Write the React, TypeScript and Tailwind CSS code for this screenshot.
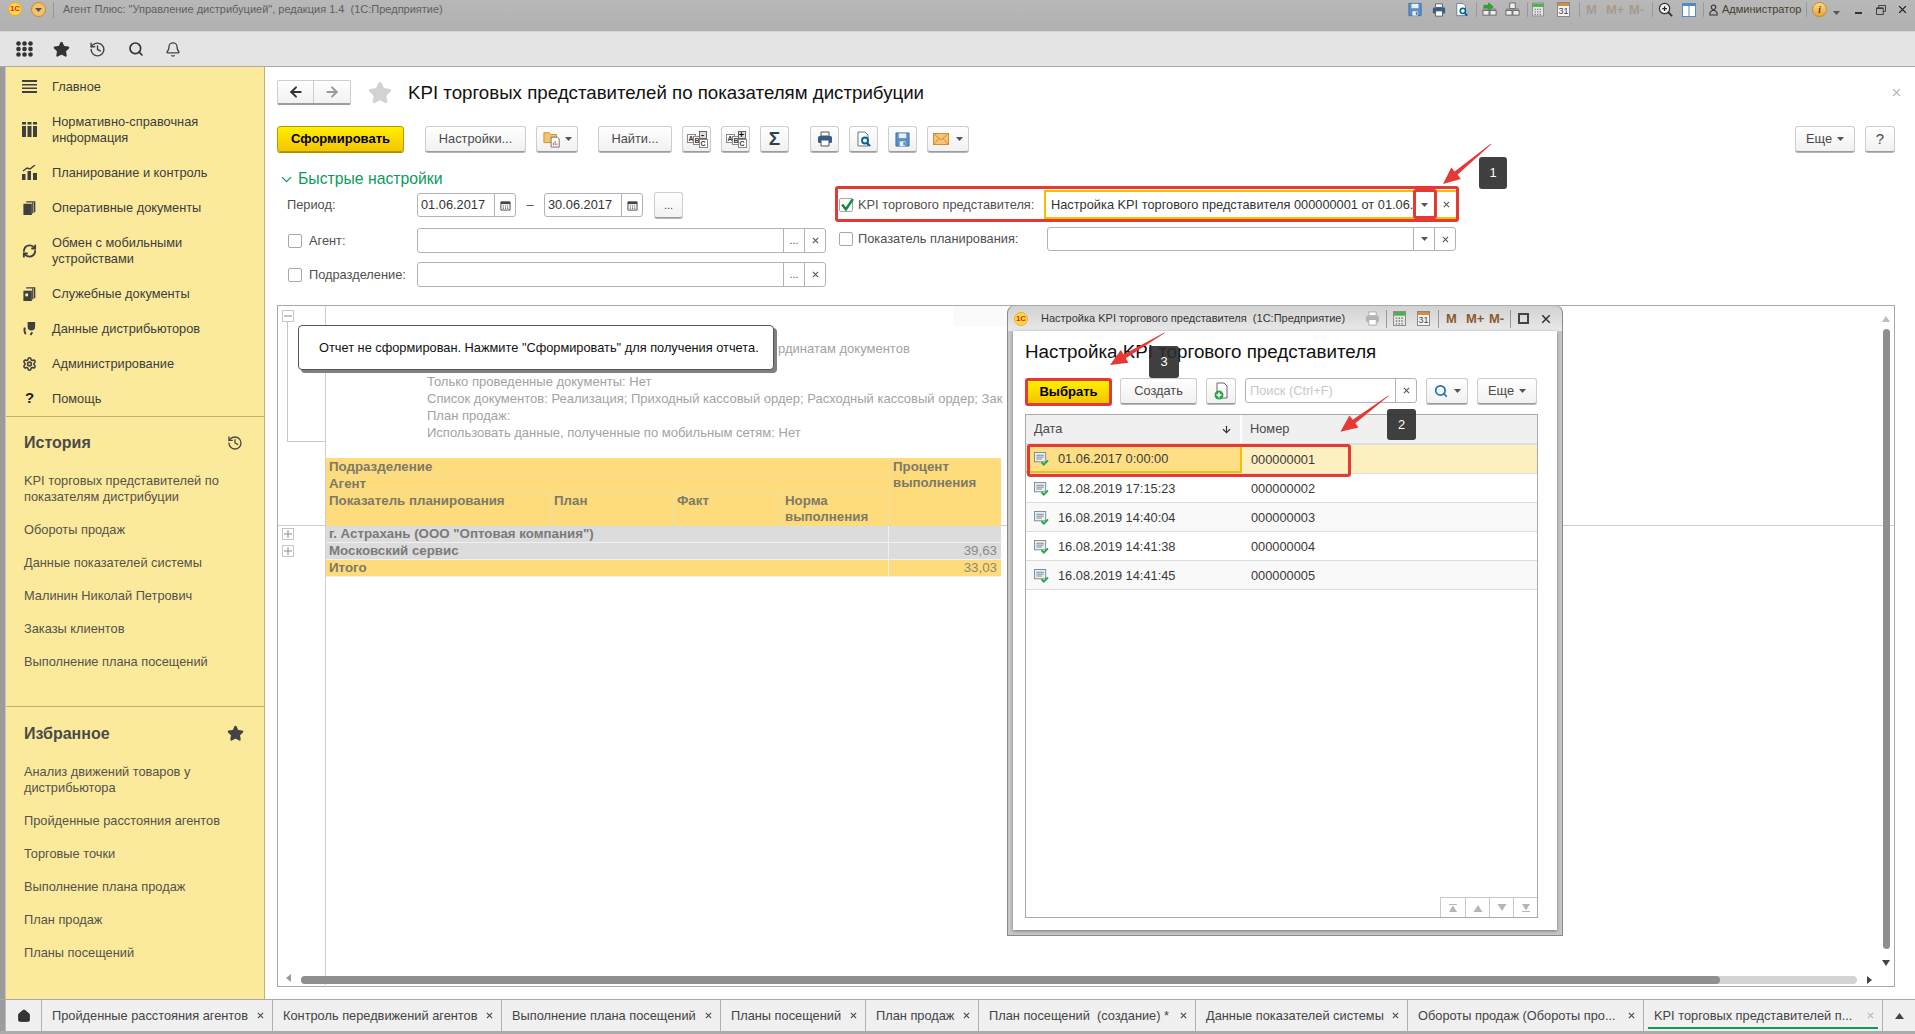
import React from "react";
import { History, Search, Bell, Star, RefreshCw, Settings, Home, ArrowDown, ArrowLeft, ArrowRight, ChevronDown } from "lucide-react";

type C = { className?: string };

const Logo1C = ({ className = "" }: C) => (
  <span className={`flex items-center justify-center rounded-full bg-[#ffd84a] border border-[#e9b21a] text-[#e0261c] font-bold text-[8px] leading-none ${className}`}>1С</span>
);
const SaveIcon = ({ className = "" }: C) => (
  <svg viewBox="0 0 16 16" className={className}><path d="M1 1h14v14H1z" fill="#5d8fc7" stroke="#3f6ea5" /><path d="M4 1.5h8v5H4z" fill="#e9f0f8" /><path d="M5 10h6v5H5z" fill="#e9f0f8" /><path d="M9 11h1.500v3H9z" fill="#3f6ea5" /></svg>
);
const PrintIcon = ({ className = "", gray }: C & { gray?: boolean }) => (
  <svg viewBox="0 0 16 16" className={className}><path d="M4 1h8v4H4z" fill="#fff" stroke={gray ? "#aaa" : "#555"} /><rect x="1" y="5" width="14" height="7" rx="1.500" fill={gray ? "#b5b5b5" : "#2f5f8f"} /><path d="M4 9h8v6H4z" fill="#fff" stroke={gray ? "#aaa" : "#555"} /></svg>
);
const PreviewIcon = ({ className = "" }: C) => (
  <svg viewBox="0 0 16 16" className={className}><path d="M2 1h7l3 3v11H2z" fill="#fff" stroke="#5a7a90" /><circle cx="9" cy="9.500" r="3" fill="#dff" stroke="#0b5f8f" strokeWidth="1.800" /><path d="M11 12l3 3" stroke="#0b5f8f" strokeWidth="2.200" /></svg>
);
const LinkIcon = ({ className = "", green }: C & { green?: boolean }) => (
  <svg viewBox="0 0 16 16" className={className}>
    {green ? <path d="M2 3.500h5V1l5 4-5 4V6.500H2z" fill="#22b02a" stroke="#0f7a16" strokeWidth=".5" /> : <path d="M5 1h6v6H5z" fill="#eee" stroke="#666" />}
    <rect x="1" y="9" width="6.500" height="5" fill="#eee" stroke="#666" /><rect x="8.500" y="9" width="6.500" height="5" fill="#eee" stroke="#666" /><path d="M1 7.500h14" stroke="#777" />
  </svg>
);
const CalcIcon = ({ className = "" }: C) => (
  <svg viewBox="0 0 14 16" className={className}><rect x=".5" y=".5" width="13" height="15" fill="#e5e5e5" stroke="#888" /><rect x="1" y="1" width="12" height="4" fill="#4fb04f" /><path d="M3 7h1.500v1.500H3zM6 7h1.500v1.500H6zM9 7h1.500v1.500H9zM3 10h1.500v1.500H3zM6 10h1.500v1.500H6zM9 10h1.500v1.500H9zM3 13h1.500v1.500H3zM6 13h1.500v1.500H6zM9 13h1.500v1.500H9z" fill="#777" /></svg>
);
const CalIcon = ({ className = "" }: C) => (
  <span className={`flex flex-col border border-[#888] bg-[#f4f4f4] text-[#444] text-[9px] leading-[10px] text-center ${className}`}>
    <span className="h-[3px] bg-[#d98a3d] block" />31
  </span>
);
const SmallCal = ({ className = "" }: C) => (
  <svg viewBox="0 0 12 12" className={className}><path d="M1 2h10v9H1z" fill="none" stroke="#444" /><path d="M1 2h10v2.500H1z" fill="#444" /><path d="M3 6h1.200v1.200H3zM5.400 6h1.200v1.200H5.400zM7.800 6H9v1.200H7.800zM3 8.300h1.200v1.200H3zM5.400 8.300h1.200v1.200H5.400zM7.800 8.300H9v1.200H7.800z" fill="#444" /></svg>
);
const Caret = ({ className = "" }: C) => (
  <svg viewBox="0 0 7 4" className={`w-[7px] h-[4px] ${className}`}><path d="M0 0h7L3.500 4z" fill="#555" /></svg>
);
const Cross = ({ className = "" }: C) => (
  <svg viewBox="0 0 8 8" className={`w-[7px] h-[7px] ${className}`}><path d="M1 1l6 6M7 1L1 7" stroke="currentColor" strokeWidth="1.200" /></svg>
);
const Sep = ({ className = "" }: C) => <span className={`w-px h-[20px] bg-[#d0d0d0] border-r border-[#999] ${className}`} />;
const FolderIcon = ({ className = "" }: C) => (
  <svg viewBox="0 0 20 20" className={className}><path d="M1 3h6l1.500 2H15v9H1z" fill="#f1c36a" stroke="#c58f2a" /><path d="M9 8h7l2 2v9H9z" fill="#fff" stroke="#667" /><path d="M11.500 17v-3M13.500 17v-5M15.500 17v-2" stroke="#d0473a" /></svg>
);
const AbcIcon = ({ sign }: { sign: "-" | "+" }) => (
  <span className="relative block w-[20px] h-[17px] text-[7px] font-bold leading-[7px] text-[#333]">
    <span className="absolute left-0 top-[3px] border border-[#888] bg-white px-px">A</span>
    <span className="absolute left-[6px] top-[5px] border border-[#888] bg-white px-px">B</span>
    <span className="absolute left-[12px] top-[8px] border border-[#888] bg-white px-px">C</span>
    <span className="absolute right-0 top-0 w-[8px] h-[8px] border border-[#666] bg-[#ddd] text-[9px] leading-[6px] text-center text-black">{sign}</span>
  </span>
);
const MailIcon = ({ className = "" }: C) => (
  <svg viewBox="0 0 16 12" className={className}><rect x=".5" y=".5" width="15" height="11" fill="#f3c47a" stroke="#d58f2a" /><path d="M.5.500L8 7l7.500-6.500M.5 11.500L6 5.500M15.500 11.500L10 5.500" fill="none" stroke="#d58f2a" /></svg>
);
const NewDocIcon = ({ className = "" }: C) => (
  <svg viewBox="0 0 16 18" className={className}><path d="M4 1h7l3 3v12H4z" fill="#fff" stroke="#667" /><circle cx="6" cy="13" r="4.500" fill="#27a844" /><path d="M3.500 13h5M6 10.500v5" stroke="#fff" strokeWidth="1.500" /></svg>
);
const DocCheck = () => (
  <svg viewBox="0 0 16 15" className="w-[15px] h-[14px] shrink-0"><rect x=".5" y=".5" width="12" height="10" fill="#e8eef2" stroke="#7a8a94" /><path d="M2.500 3.500h8M2.500 5.500h8M2.500 7.500h6" stroke="#7a8a94" /><path d="M8 11l2.500 2.500L15 9" fill="none" stroke="#27a844" strokeWidth="2" /></svg>
);
const BoxPM = ({ plus }: { plus?: boolean }) => (
  <svg viewBox="0 0 12 12" className="w-[12px] h-[12px] block"><rect x=".5" y=".5" width="11" height="11" fill="#fff" stroke="#c6c6c6" /><path d={plus ? "M2 6h8M6 2v8" : "M2 6h8"} stroke="#8a8a8a" /></svg>
);

const Btn = ({ className = "", children }: React.PropsWithChildren<C>) => (
  <div className={`h-[26px] flex items-center justify-center shrink-0 rounded-[3px] border border-[#cdcdcd] border-b-[#9c9c9c] bg-linear-to-b from-white to-[#f1f1f1] shadow-[0_1px_0_#b5b5b5] text-[#4a4a4a] ${className}`}>{children}</div>
);
const Box = ({ className = "", children }: React.PropsWithChildren<C>) => (
  <div className={`flex rounded-[3px] border border-[#b3b3b3] bg-white shrink-0 ${className}`}>{children}</div>
);
const DateField = ({ v }: { v: string }) => (
  <Box className="w-[99px] h-[24px]">
    <span className="flex-1 pl-[3px] leading-[22px] text-[#333]">{v}</span>
    <span className="w-[21px] border-l border-[#b3b3b3] flex items-center justify-center"><SmallCal className="w-[11px] h-[11px]" /></span>
  </Box>
);
const Cb = ({ className = "", checked }: C & { checked?: boolean }) => (
  <span className={`relative block w-[14px] h-[14px] rounded-[2px] border border-[#a8a8a8] bg-white shrink-0 ${className}`}>
    {checked && <svg viewBox="0 0 14 14" className="absolute left-0 -top-[2px] w-[15px] h-[15px]"><path d="M2 7l3.500 4.500L12 2" fill="none" stroke="#128a4a" strokeWidth="2.400" /></svg>}
  </span>
);
const TailButtons = ({ first }: { first: "dots" | "caret" }) => (
  <>
    <span className="w-[21px] border-l border-[#b3b3b3] flex items-center justify-center text-[#555] text-[11px]">{first === "dots" ? "..." : <Caret />}</span>
    <span className="w-[21px] border-l border-[#b3b3b3] flex items-center justify-center text-[#555]"><Cross /></span>
  </>
);

const MenuIco = ({ i }: { i: number }) => {
  const cn = "w-[15px] h-[15px] text-[#444]";
  const f = "#3f3f3f";
  switch (i) {
    case 0: return <svg viewBox="0 0 15 15" className={cn}><path d="M0 1h15v2H0zM0 5h15v1.500H0zM0 8.500h15V10H0zM0 12h15v2H0z" fill={f} /></svg>;
    case 1: return <svg viewBox="0 0 15 15" className={cn}><path d="M0 4h4v11H0zM5.500 4h4v11h-4zM11 4h4v11h-4zM0 0h4v2.500H0zM5.500 0h4v2.500h-4zM11 0h4v2.500h-4z" fill={f} /></svg>;
    case 2: return <svg viewBox="0 0 15 15" className={cn}><path d="M0 9h3.500v6H0zM5.500 6h3.500v9H5.500zM11 8h4v7h-4z" fill={f} /><path d="M1 6l4-3 3 1 5-4" fill="none" stroke={f} strokeWidth="1.400" /></svg>;
    case 3: return <svg viewBox="0 0 15 16" className={cn}><path d="M1 4h9v12H1z" fill={f} /><path d="M11 3v11M4 2h9v11" fill="none" stroke={f} strokeWidth="1.400" /></svg>;
    case 4: return <RefreshCw className="w-[16px] h-[16px] text-[#3f3f3f]" strokeWidth={3} />;
    case 5: return <svg viewBox="0 0 15 16" className={cn}><path d="M1 5h9v11H1z" fill={f} /><path d="M3 8h3v3H3z" fill="#fbea9c" /><path d="M11 3v11M4 2h9v11" fill="none" stroke={f} strokeWidth="1.400" /></svg>;
    case 6: return <svg viewBox="0 0 16 16" className={cn}><path d="M6 1h8v5a4 4 0 0 1-8 0z" fill={f} /><path d="M3 7a8 8 0 0 0 1 7M9 15l2-3" fill="none" stroke={f} strokeWidth="2" /></svg>;
    case 7: return <Settings className="w-[16px] h-[16px] text-[#3f3f3f]" strokeWidth={2.500} />;
    default: return <span className="text-[15px] font-bold text-[#222]">?</span>;
  }
};

const menu: [string, number?][] = [
  ["Главное"],
  ["Нормативно-справочная\nинформация"],
  ["Планирование и контроль"],
  ["Оперативные документы"],
  ["Обмен с мобильными\nустройствами"],
  ["Служебные документы"],
  ["Данные дистрибьюторов"],
  ["Администрирование"],
  ["Помощь"],
];
const history = ["KPI торговых представителей по\nпоказателям дистрибуции", "Обороты продаж", "Данные показателей системы", "Малинин Николай Петрович", "Заказы клиентов", "Выполнение плана посещений"];
const favs = ["Анализ движений товаров у\nдистрибьютора", "Пройденные расстояния агентов", "Торговые точки", "Выполнение плана продаж", "План продаж", "Планы посещений"];

const SideList = ({ items }: { items: string[] }) => (
  <div>
    {items.map((t) => (
      <div key={t} className="px-[18px] py-[8.500px] leading-4 text-[#55534a] whitespace-pre-line">{t}</div>
    ))}
  </div>
);

const Sidebar = () => (
  <aside className="w-[259px] shrink-0 bg-[#fbea9c] border-r border-[#bdb16e] flex flex-col">
    <div className="pt-[2px] h-[350px] border-b border-[#bfb264]">
      {menu.map(([t], i) => (
        <div key={t} className={`flex items-center ${t.includes("\n") ? "h-[51px]" : "h-[35px]"}`}>
          <span className="w-[15px] ml-[16px] mr-[15px] flex justify-center"><MenuIco i={i} /></span>
          <span className="leading-4 text-[#3d3d3d] whitespace-pre-line">{t}</span>
        </div>
      ))}
    </div>
    <div className="h-[290px] border-b border-[#bfb264]">
      <div className="h-[47px] pt-[4px] px-[18px] flex items-center justify-between">
        <span className="font-bold text-[16px] text-[#4a4a4a]">История</span>
        <History className="w-[16px] h-[16px] text-[#4a4a4a] mr-[3px]" strokeWidth={2} />
      </div>
      <SideList items={history} />
    </div>
    <div className="flex-1">
      <div className="h-[48px] pt-[5px] px-[18px] flex items-center justify-between">
        <span className="font-bold text-[16px] text-[#4a4a4a]">Избранное</span>
        <Star className="w-[17px] h-[17px] text-[#444] mr-[2px]" fill="#444" />
      </div>
      <SideList items={favs} />
    </div>
  </aside>
);

const TitleBar = () => (
  <header className="h-[31px] shrink-0 bg-linear-to-b from-[#b8b8b8] to-[#b0b0b0] flex items-start pt-[2px] text-[11px]">
    <Logo1C className="w-[14px] h-[14px] ml-[8px]" />
    <span className="w-[15px] h-[15px] ml-[9px] rounded-full bg-[#f5c26b] border border-[#c98a2a] flex items-center justify-center"><Caret /></span>
    <span className="w-px h-[16px] ml-[7px] bg-[#999]" />
    <span className="flex-1 ml-[9px] text-[#5f5f5f] leading-[15px] whitespace-pre">Агент Плюс: "Управление дистрибуцией", редакция 1.4  (1С:Предприятие)</span>
    <div className="flex items-center h-[15px] pr-[8px] shrink-0">
      <SaveIcon className="w-[14px] h-[15px]" />
      <PrintIcon className="w-[14px] h-[14px] ml-[10px]" />
      <PreviewIcon className="w-[14px] h-[15px] ml-[9px]" />
      <Sep className="ml-[7px] !h-[15px]" />
      <LinkIcon green className="w-[15px] h-[15px] ml-[5px]" />
      <LinkIcon className="w-[15px] h-[15px] ml-[8px]" />
      <Sep className="ml-[7px] !h-[15px]" />
      <CalcIcon className="w-[12px] h-[15px] ml-[4px]" />
      <CalIcon className="w-[13px] h-[15px] ml-[13px]" />
      <Sep className="ml-[9px] !h-[15px]" />
      <span className="ml-[6px] font-bold text-[13px] text-[#a89a8c] w-[11px]">M</span>
      <span className="ml-[9px] font-bold text-[13px] text-[#a89a8c] w-[19px]">M+</span>
      <span className="ml-[4px] font-bold text-[13px] text-[#a89a8c] w-[15px]">M-</span>
      <Sep className="ml-[8px] !h-[15px]" />
      <svg viewBox="0 0 16 16" className="w-[15px] h-[15px] ml-[5px]"><circle cx="7" cy="7" r="5.500" fill="#eee" stroke="#333" strokeWidth="1.300" /><path d="M4.500 7h5M7 4.500v5" stroke="#222" strokeWidth="1.300" /><path d="M11 11l4 4" stroke="#333" strokeWidth="2" /></svg>
      <svg viewBox="0 0 14 14" className="w-[14px] h-[14px] ml-[9px]"><rect x=".5" y=".5" width="13" height="13" fill="#fff" stroke="#4d8cc4" /><path d="M7 1v12" stroke="#4d8cc4" /><path d="M1 1h12v2H1z" fill="#4d8cc4" /></svg>
      <Sep className="ml-[7px] !h-[15px]" />
      <svg viewBox="0 0 10 13" className="w-[9px] h-[12px] ml-[5px]"><circle cx="5" cy="3.500" r="2.500" fill="none" stroke="#333" strokeWidth="1.200" /><path d="M1 12V9.500L3.500 7h3L9 9.500V12z" fill="none" stroke="#333" strokeWidth="1.200" /></svg>
      <span className="ml-[4px] w-[78px] text-[#4b3f2f] whitespace-nowrap">Администратор</span>
      <Sep className="ml-[6px] !h-[15px]" />
      <span className="ml-[5px] w-[15px] h-[15px] rounded-full bg-linear-to-b from-[#fbd98a] to-[#e9a537] border border-[#c98a2a] flex items-center justify-center italic font-bold text-[11px] text-[#6b4b10] [font-family:'Liberation_Serif',serif]">i</span>
      <Caret className="ml-[6px] mt-[6px]" />
      <span className="ml-[15px] mt-[6px] w-[7px] h-[2px] bg-[#333]" />
      <svg viewBox="0 0 11 11" className="w-[10px] h-[10px] ml-[14px]"><path d="M3 3V.5h7.500V7H8" fill="none" stroke="#333" /><path d="M.5 3.500H8v7H.5z" fill="none" stroke="#333" /><path d="M.5 3.500H8" stroke="#333" strokeWidth="1.500" /></svg>
      <Cross className="!w-[9px] !h-[9px] ml-[12px] text-[#222]" />
    </div>
  </header>
);

const TopTools = () => (
  <div className="h-[36px] shrink-0 bg-[#e4e4e4] border-y border-[#a9a9a9] border-t-[#d5d5d5] flex items-center pl-[6px] border-l-0">
    <svg viewBox="0 0 17 16" className="w-[17px] h-[16px] ml-[10px]"><g fill="#333">{[2.5, 8.5, 14.5].flatMap((x) => [2.5, 8, 13.5].map((y) => <circle key={`${x}-${y}`} cx={x} cy={y} r="2.300" />))}</g></svg>
    <Star className="w-[17px] h-[17px] ml-[20px] text-[#333]" fill="#333" />
    <History className="w-[17px] h-[17px] ml-[19px] text-[#444]" strokeWidth={2} />
    <Search className="w-[16px] h-[16px] ml-[22px] text-[#333]" strokeWidth={2.5} />
    <Bell className="w-[16px] h-[17px] ml-[21px] text-[#444]" strokeWidth={2} />
  </div>
);

const Header = () => (
  <div className="flex items-center h-[25px]">
    <div className="flex w-[74px] h-[25px] rounded-[2px] border border-[#cdcdcd] border-b-[#9c9c9c] border-b-2 bg-linear-to-b from-white to-[#f1f1f1]">
      <span className="w-[36px] flex items-center justify-center border-r border-[#cdcdcd]"><ArrowLeft className="w-[16px] h-[16px] text-[#333]" strokeWidth={3} /></span>
      <span className="flex-1 flex items-center justify-center"><ArrowRight className="w-[16px] h-[16px] text-[#9a9a9a]" strokeWidth={3} /></span>
    </div>
    <Star className="w-[24px] h-[24px] ml-[17px] text-[#d2d2d2]" fill="#d2d2d2" />
    <h1 className="ml-[16px] pt-[2px] text-[18.700px] text-[#111] whitespace-nowrap font-normal">KPI торговых представителей по показателям дистрибуции</h1>
    <Cross className="ml-auto mr-[14px] !w-[9px] !h-[9px] text-[#b5b5b5]" />
  </div>
);

const Toolbar = () => (
  <div className="flex items-center h-[26px] mt-[21px]">
    <div className="w-[127px] h-[26px] rounded-[3px] border border-[#b59a00] bg-linear-to-b from-[#fff000] to-[#f4c400] shadow-[0_1px_0_#a99100] flex items-center justify-center font-bold text-[13px] text-black">Сформировать</div>
    <Btn className="w-[101px] ml-[21px]">Настройки...</Btn>
    <Btn className="w-[42px] ml-[10px] gap-[4px]"><FolderIcon className="w-[18px] h-[18px]" /><Caret /></Btn>
    <Btn className="w-[74px] ml-[20px]">Найти...</Btn>
    <Btn className="w-[29px] ml-[10px]"><AbcIcon sign="-" /></Btn>
    <Btn className="w-[29px] ml-[10px]"><AbcIcon sign="+" /></Btn>
    <Btn className="w-[29px] ml-[10px] text-[19px] font-bold !text-[#2f4050]">Σ</Btn>
    <Btn className="w-[29px] ml-[21px]"><PrintIcon className="w-[16px] h-[16px]" /></Btn>
    <Btn className="w-[29px] ml-[10px]"><PreviewIcon className="w-[16px] h-[16px]" /></Btn>
    <Btn className="w-[29px] ml-[10px]"><SaveIcon className="w-[15px] h-[15px]" /></Btn>
    <Btn className="w-[42px] ml-[10px] gap-[7px]"><MailIcon className="w-[16px] h-[12px]" /><Caret /></Btn>
    <Btn className="w-[60px] ml-auto gap-[5px]">Еще<Caret /></Btn>
    <Btn className="w-[30px] ml-[10px] mr-[20px] text-[15px]">?</Btn>
  </div>
);

const QuickForm = () => (
  <>
    <div className="flex items-center h-[20px] mt-[17px] text-[#0c9a5c] text-[15.750px]">
      <ChevronDown className="w-[17px] h-[17px] ml-[1px] mr-[3px]" strokeWidth={1.800} />
      <span className="whitespace-nowrap">Быстрые настройки</span>
    </div>
    <div className="flex text-[#4f4f4f]">
      <div className="w-[562px] pt-[4px] shrink-0">
        <div className="flex items-center h-[24px]">
          <span className="w-[140px] pl-[10px]">Период:</span>
          <DateField v="01.06.2017" />
          <span className="w-[28px] text-center">–</span>
          <DateField v="30.06.2017" />
          <Btn className="w-[29px] ml-[11px] text-[11px]">...</Btn>
        </div>
        <div className="flex items-center h-[25px] mt-[11px]">
          <span className="w-[140px] flex items-center pl-[11px]"><Cb /><span className="ml-[7px]">Агент:</span></span>
          <Box className="w-[409px] h-[25px]"><span className="flex-1" /><TailButtons first="dots" /></Box>
        </div>
        <div className="flex items-center h-[25px] mt-[9px]">
          <span className="w-[140px] flex items-center pl-[11px]"><Cb /><span className="ml-[7px]">Подразделение:</span></span>
          <Box className="w-[409px] h-[25px]"><span className="flex-1" /><TailButtons first="dots" /></Box>
        </div>
      </div>
      <div className="pt-[1px]">
        <div className="flex items-center h-[29px]">
          <Cb checked />
          <span className="w-[186px] ml-[5px] whitespace-nowrap">KPI торгового представителя:</span>
          <div className="flex w-[412px] h-[29px] border-2 border-r-0 border-[#f5bf00] bg-white">
            <span className="flex-1 min-w-0 overflow-hidden whitespace-nowrap pl-[5px] leading-[25px] text-[#333]">Настройка KPI торгового представителя 000000001 от 01.06.</span>
            <span className="w-[23px] flex items-center justify-center shrink-0"><Caret /></span>
            <span className="w-[20px] flex items-center justify-center shrink-0 text-[#555]"><Cross /></span>
          </div>
        </div>
        <div className="flex items-center h-[24px] mt-[8px]">
          <Cb />
          <span className="w-[189px] ml-[5px] whitespace-nowrap">Показатель планирования:</span>
          <Box className="w-[409px] h-[24px]"><span className="flex-1" /><TailButtons first="caret" /></Box>
        </div>
      </div>
    </div>
  </>
);

const hCell = "bg-[#fedc7c] px-[3px] leading-[16px] font-bold text-[13.300px] text-[#7d7968]";
const rowCell = "h-[17px] border-b border-[#f0f0f0] leading-[15px]";

const Report = () => (
  <div className="relative mt-[18px] mr-[20px] h-[682px] border border-[#a9a9a9] bg-white overflow-hidden">
    <div className="flex h-[219px]">
      <div className="w-[48px] shrink-0 border-r border-[#cfcfcf] pl-[4px] pt-[4px]">
        <BoxPM />
        <div className="ml-[5px] w-[39px] h-[120px] border-l border-b border-[#c9c9c9]" />
      </div>
      <div className="flex-1 min-w-0 flex flex-col">
        <div className="pt-[34px] pl-[101px] text-[13px] leading-[17px] text-[#a3a3a3] whitespace-nowrap h-[152px]">
          <div className="pl-[351px]">рдинатам документов</div>
          <div className="h-[16px]" />
          <div>Только проведенные документы: Нет</div>
          <div>Список документов: Реализация; Приходный кассовый ордер; Расходный кассовый ордер; Зак</div>
          <div>План продаж:</div>
          <div>Использовать данные, полученные по мобильным сетям: Нет</div>
        </div>
        <div className="grid grid-cols-[224px_122px_107px_107px_111px] grid-rows-[17px_16px_33px] gap-px w-[675px] bg-[#efe0a6] h-[67px]">
          <div className={`${hCell} col-span-4 pt-[1px]`}>Подразделение</div>
          <div className={`${hCell} row-span-3 pt-[1px]`}>Процент<br />выполнения</div>
          <div className={`${hCell} col-span-4`}>Агент</div>
          <div className={hCell}>Показатель планирования</div>
          <div className={hCell}>План</div>
          <div className={hCell}>Факт</div>
          <div className={hCell}>Норма<br />выполнения</div>
        </div>
      </div>
    </div>
    <div className="flex border-t border-[#cfcfcf] h-[460px]">
      <div className="w-[48px] shrink-0 border-r border-[#cfcfcf] pl-[4px] pt-[2px] flex flex-col gap-[5px]">
        <BoxPM plus />
        <BoxPM plus />
      </div>
      <div className="w-[675px] text-[#7a7a7a] font-bold text-[13.300px]">
        <div className="grid grid-cols-[563px_112px]">
          <div className={`${rowCell} bg-[#dcdcdc] px-[3px] border-r`}>г. Астрахань (ООО "Оптовая компания")</div>
          <div className={`${rowCell} bg-[#dcdcdc]`} />
        </div>
        <div className="grid grid-cols-[563px_112px]">
          <div className={`${rowCell} bg-[#dcdcdc] px-[3px] border-r`}>Московский сервис</div>
          <div className={`${rowCell} bg-[#dcdcdc] text-right pr-[4px] font-normal text-[#8a8a8a]`}>39,63</div>
        </div>
        <div className="grid grid-cols-[563px_112px]">
          <div className={`${rowCell} bg-[#fedc7c] px-[3px] text-[#7d7968] border-[#efe0a6] border-r`}>Итого</div>
          <div className={`${rowCell} bg-[#fedc7c] text-right pr-[4px] font-normal text-[#8f8a70] border-[#efe0a6]`}>33,03</div>
        </div>
      </div>
    </div>
    {/* scroll bars lie over the report */}
    <span className="absolute right-[4px] top-[10px] w-0 h-0 border-x-[4px] border-x-transparent border-b-[6px] border-b-[#bdbdbd]" />
    <div className="absolute right-[4px] top-[23px] w-[7px] h-[620px] rounded-full bg-[#8f8f8f]" />
    <span className="absolute right-[4px] top-[654px] w-0 h-0 border-x-[4px] border-x-transparent border-t-[6px] border-t-[#444]" />
    <span className="absolute left-[8px] top-[668px] w-0 h-0 border-y-[4px] border-y-transparent border-r-[5px] border-r-[#999]" />
    <div className="absolute left-[23px] right-[37px] top-[670px] h-[8px] rounded-full bg-[#d4d4d4]">
      <div className="h-[8px] w-[1419px] rounded-full bg-[#8f8f8f]" />
    </div>
    <span className="absolute right-[22px] top-[670px] w-0 h-0 border-y-[4px] border-y-transparent border-l-[5px] border-l-[#444]" />
    <div className="absolute left-[675px] top-0 w-[54px] h-[20px] bg-[#fafafa]" />
  </div>
);

const rows = [
  ["01.06.2017 0:00:00", "000000001"],
  ["12.08.2019 17:15:23", "000000002"],
  ["16.08.2019 14:40:04", "000000003"],
  ["16.08.2019 14:41:38", "000000004"],
  ["16.08.2019 14:41:45", "000000005"],
];

const Modal = () => (
  <div className="absolute left-[1007px] top-[305px] w-[556px] h-[631px] flex flex-col rounded-t-[8px] border border-[#8a8a8a] border-t-[#aaa] bg-[#c6c6c6]">
    <div className="h-[25px] shrink-0 rounded-t-[8px] bg-linear-to-b from-[#d2d2d2] to-[#e9e9e9] flex items-center text-[11px] text-[#333]">
      <Logo1C className="w-[14px] h-[14px] ml-[6px]" />
      <span className="ml-[13px] flex-1 whitespace-pre">Настройка KPI торгового представителя  (1С:Предприятие)</span>
      <PrintIcon gray className="w-[15px] h-[15px]" />
      <Sep className="ml-[6px] !h-[18px]" />
      <CalcIcon className="w-[13px] h-[15px] ml-[6px]" />
      <CalIcon className="w-[13px] h-[15px] ml-[11px]" />
      <Sep className="ml-[8px] !h-[18px]" />
      <span className="ml-[7px] font-bold text-[13px] text-[#8a5a2f] w-[11px]">M</span>
      <span className="ml-[9px] font-bold text-[13px] text-[#8a5a2f] w-[19px]">M+</span>
      <span className="ml-[4px] font-bold text-[13px] text-[#8a5a2f] w-[15px]">M-</span>
      <Sep className="ml-[6px] !h-[18px]" />
      <span className="w-[11px] h-[11px] ml-[7px] border-2 border-[#444]" />
      <Cross className="!w-[10px] !h-[10px] ml-[12px] mr-[11px] text-[#333]" />
    </div>
    <div className="flex-1 mx-[5px] mb-[5px] bg-white shadow-[0_1px_3px_#777] pl-[12px] pr-[20px] pt-[9px] flex flex-col min-h-0">
      <div className="text-[18.800px] leading-[24px] text-[#111] whitespace-nowrap">Настройка KPI торгового представителя</div>
      <div className="flex items-start mt-[14px] h-[28px]">
        <div className="w-[87px] h-[28px] rounded-[3px] border-[3px] border-[#e53935] bg-linear-to-b from-[#fff000] to-[#f4c400] flex items-center justify-center font-bold text-[13px] text-black">Выбрать</div>
        <Btn className="w-[77px] ml-[8px]">Создать</Btn>
        <Btn className="w-[30px] ml-[9px]"><NewDocIcon className="w-[16px] h-[18px]" /></Btn>
        <Box className="w-[172px] h-[25px] ml-[9px]">
          <span className="flex-1 pl-[4px] leading-[23px] text-[#c9c9c9]">Поиск (Ctrl+F)</span>
          <span className="w-[21px] border-l border-[#b3b3b3] flex items-center justify-center text-[#555]"><Cross /></span>
        </Box>
        <Btn className="w-[42px] ml-[9px] gap-[6px]"><Search className="w-[14px] h-[14px] text-[#2a6fb0]" strokeWidth={3} /><Caret /></Btn>
        <Btn className="w-[60px] ml-[9px] gap-[5px]">Еще<Caret /></Btn>
      </div>
      <div className="mt-[8px] w-[513px] h-[504px] border border-[#a9a9a9] flex flex-col text-[#3a3a3a] shrink-0">
        <div className="h-[30px] shrink-0 bg-[#f0f0f0] flex items-center border-b-2 border-[#dfdfdf] text-[#4a4a4a]">
          <div className="w-[216px] h-full pl-[8px] flex items-center justify-between pr-[8px] border-r-2 border-white"><span>Дата</span><ArrowDown className="w-[11px] h-[11px] text-[#333]" strokeWidth={2.500} /></div>
          <span className="pl-[8px]">Номер</span>
        </div>
        {rows.map(([d, n], i) => (
          <div key={n} className={`h-[29px] shrink-0 flex items-center pt-[1px] border-b border-[#dcdcdc] ${i === 0 ? "bg-[#fdf0c0]" : i % 2 ? "bg-white" : "bg-[#f9f9f9]"}`}>
            <div className={`w-[216px] h-full flex items-center pl-[8px] ${i === 0 ? "bg-[#fedf86] border-r-2 border-b-2 border-[#f5bf00] pt-[1px]" : ""}`}>
              <DocCheck />
              <span className="ml-[9px]">{d}</span>
            </div>
            <span className="pl-[9px]">{n}</span>
          </div>
        ))}
        <div className="mt-auto flex justify-end">
          <div className="flex h-[20px] border-t border-l border-[#c9c9c9]">
            {[0, 1, 2, 3].map((k) => (
              <span key={k} className={`w-[24px] flex items-center justify-center ${k ? "border-l border-[#c9c9c9]" : ""}`}>
                <svg viewBox="0 0 10 10" className="w-[10px] h-[10px]">
                  {k === 0 && <path d="M1 1h8v1H1zM5 2.500L9 9H1z" fill="#b5b5b5" />}
                  {k === 1 && <path d="M5 2L9.500 9H.5z" fill="#b5b5b5" />}
                  {k === 2 && <path d="M5 8L.5 1h9z" fill="#b5b5b5" />}
                  {k === 3 && <path d="M1 8h8v1H1zM5 7.500L1 1h8z" fill="#b5b5b5" />}
                </svg>
              </span>
            ))}
          </div>
        </div>
      </div>
    </div>
  </div>
);

function arrowPoints(x1: number, y1: number, x2: number, y2: number) {
  const d = Math.hypot(x2 - x1, y2 - y1);
  const u = [(x2 - x1) / d, (y2 - y1) / d];
  const n = [-u[1], u[0]];
  const bx = x2 - u[0] * 17;
  const by = y2 - u[1] * 17;
  const p = (x: number, y: number, w: number) => `${(x + n[0] * w).toFixed(1)},${(y + n[1] * w).toFixed(1)}`;
  return [p(x1, y1, 0.4), p(bx, by, 2.2), p(bx, by, 7.5), `${x2},${y2}`, p(bx, by, -7.5), p(bx, by, -2.2), p(x1, y1, -0.4)].join(" ");
}

const Arrows = () => (
  <>
    <svg viewBox="1434 138 64 54" className="absolute left-[1434px] top-[138px] w-[64px] h-[54px]"><polygon points={arrowPoints(1491, 144, 1443, 184)} fill="#e53935" /></svg>
    <svg viewBox="1335 390 60 48" className="absolute left-[1335px] top-[390px] w-[60px] h-[48px]"><polygon points={arrowPoints(1388.5, 395.7, 1340.4, 431.7)} fill="#e53935" /></svg>
    <svg viewBox="1105 328 65 42" className="absolute left-[1105px] top-[328px] w-[65px] h-[42px]"><polygon points={arrowPoints(1164.6, 332.7, 1110, 365)} fill="#e53935" /></svg>
  </>
);

const Badge = ({ className = "", n }: C & { n: string }) => (
  <div className={`absolute rounded-[3px] bg-[#2b2b2b]/90 text-white flex items-center justify-center ${className}`}>{n}</div>
);

const tabs: [string, number][] = [
  ["Пройденные расстояния агентов", 231],
  ["Контроль передвижений агентов", 229],
  ["Выполнение плана посещений", 219],
  ["Планы посещений", 145],
  ["План продаж", 113],
  ["План посещений  (создание) *", 217],
  ["Данные показателей системы", 212],
  ["Обороты продаж (Обороты про...", 236],
  ["KPI торговых представителей п...", 239],
];
const tabW: Record<number, string> = { 231: "w-[231px]", 229: "w-[229px]", 219: "w-[219px]", 145: "w-[145px]", 113: "w-[113px]", 217: "w-[217px]", 212: "w-[212px]", 236: "w-[236px]", 239: "w-[239px]" };

const Tabs = () => (
  <div className="h-[35px] shrink-0 flex flex-col">
    <div className="h-[32px] flex border-t border-b-0 border-[#a9a9a9] bg-[#f0f0f0] text-[#444]">
      <div className="w-[6px] bg-[#9c9c9c] border-r border-[#bbb]" />
      <div className="w-[36px] flex items-center justify-center border-r border-[#b0b0b0]"><Home className="w-[14px] h-[14px] text-[#333]" fill="#333" /></div>
      {tabs.map(([t, w], i) => (
        <div key={t} className={`${tabW[w]} relative flex items-center pl-[10px] pr-[8px] border-r border-[#b0b0b0]`}>
          <span className="whitespace-pre">{t}</span>
          <Cross className={`ml-auto ${i === tabs.length - 1 ? "text-[#b5b5b5]" : "text-[#444]"}`} />
          {i === tabs.length - 1 && <span className="absolute left-[4px] right-[4px] bottom-[2px] h-[2px] bg-[#0e9b57]" />}
        </div>
      ))}
      <div className="flex-1 flex items-center justify-center"><svg viewBox="0 0 9 6" className="w-[9px] h-[6px]"><path d="M4.500 0L9 6H0z" fill="#444" /></svg></div>
    </div>
    <div className="flex-1 bg-[#ababab]" />
  </div>
);

export default function App() {
  return (
    <div className="relative w-[1915px] h-[1034px] overflow-hidden flex flex-col bg-white text-[12.800px] [font-family:'Liberation_Sans',Arial,sans-serif]">
      <TitleBar />
      <TopTools />
      <div className="h-[932px] shrink-0 flex min-h-0">
        <div className="w-[6px] shrink-0 bg-[#9c9c9c] border-r border-[#c4c4c4]" />
        <Sidebar />
        <main className="flex-1 min-w-0 pl-[12px] pt-[13px]">
          <Header />
          <Toolbar />
          <QuickForm />
          <Report />
        </main>
      </div>
      <Tabs />

      {/* hint over the report */}
      <div className="absolute left-[298px] top-[325px] w-[476px] h-[45px] rounded-[4px] border border-[#555] bg-white shadow-[3px_3px_0_#808080] flex items-center pl-[20px] text-[#111]">Отчет не сформирован. Нажмите "Сформировать" для получения отчета.</div>

      <Modal />

      {/* reviewer's marks drawn on the screenshot */}
      <div className="absolute left-[835px] top-[186px] w-[624px] h-[36px] rounded-[3px] border-[3px] border-[#e53935]" />
      <div className="absolute left-[1413px] top-[189px] w-[24px] h-[30px] rounded-[3px] border-[3px] border-[#e53935]" />
      <div className="absolute left-[1027px] top-[444px] w-[324px] h-[33px] rounded-[3px] border-[3px] border-[#e53935]" />
      <Badge n="1" className="left-[1479px] top-[157px] w-[28px] h-[32px]" />
      <Badge n="2" className="left-[1387px] top-[409px] w-[29px] h-[31px]" />
      <Badge n="3" className="left-[1149px] top-[346px] w-[30px] h-[32px]" />
      <Arrows />
    </div>
  );
}
